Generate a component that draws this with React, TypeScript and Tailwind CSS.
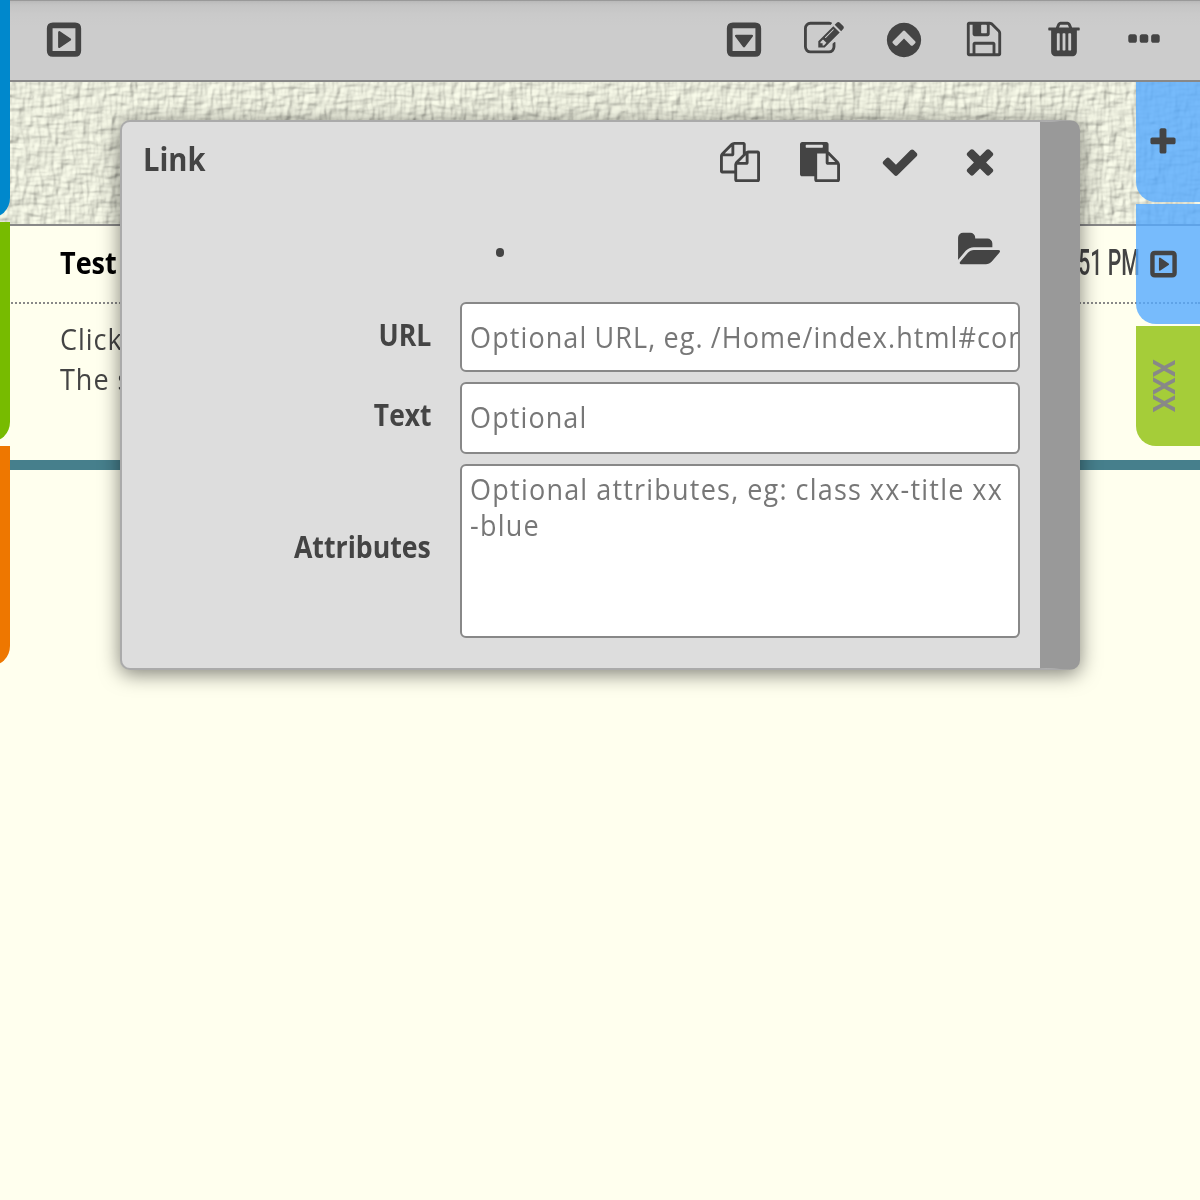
import type { ReactNode } from 'react';

const PATHS = {
  caretRight:
    'M1216 876q0 26-22 42l-480 330q-26 17-54 4-28-14-28-46V546q0-32 28-46 28-13 54 4l480 330q22 16 22 42zM384 364v1024h1024V364zM400 108h992q272 0 272 272v992q0 272-272 272H400q-272 0-272-272V380q0-272 272-272z',
  caretDown:
    'M896 1230q-26 0-42-22L500 738q-17-26-4-54 14-28 46-28h708q32 0 46 28 13 28-4 54l-354 470q-16 22-42 22zM384 364v1024h1024V364zM400 108h992q272 0 272 272v992q0 272-272 272H400q-272 0-272-272V380q0-272 272-272z',
  copy: 'M1696 384q40 0 68 28t28 68v1216q0 40-28 68t-68 28h-960q-40 0-68-28t-28-68v-288h-544q-40 0-68-28t-28-68v-672q0-40 20-88t48-76l408-408q28-28 76-48t88-20h416q40 0 68 28t28 68v328q68-40 128-40h416zm-544 213l-299 299h299v-299zm-640-384l-299 299h299v-299zm196 647l316-316v-416h-384v416q0 40-28 68t-68 28h-416v640h512v-256q0-40 20-88t48-76zm956 804v-1152h-384v416q0 40-28 68t-68 28h-416v640h896z',
  paste:
    'M768 1664h896v-640h-416q-40 0-68-28t-28-68v-416h-384v1152zm256-1440v-64q0-13-9.5-22.5t-22.5-9.5h-704q-13 0-22.5 9.5t-9.5 22.5v64q0 13 9.5 22.5t22.5 9.5h704q13 0 22.5-9.5t9.5-22.5zm256 672h299l-299-299v299zm512 128v672q0 40-28 68t-68 28h-960q-40 0-68-28t-28-68v-160h-544q-40 0-68-28t-28-68v-1344q0-40 28-68t68-28h1088q40 0 68 28t28 68v328q21 13 36 28l408 408q28 28 48 76t20 88z',
  check:
    'M1671 566q0 40-28 68l-724 724-136 136q-28 28-68 28t-68-28l-136-136-362-362q-28-28-28-68t28-68l136-136q28-28 68-28t68 28l294 295 656-657q28-28 68-28t68 28l136 136q28 28 28 68z',
  times:
    'M1490 1322q0 40-28 68l-136 136q-28 28-68 28t-68-28l-294-294-294 294q-28 28-68 28t-68-28l-136-136q-28-28-28-68t28-68l294-294-294-294q-28-28-28-68t28-68l136-136q28-28 68-28t68 28l294 294 294-294q28-28 68-28t68 28l136 136q28 28 28 68t-28 68l-294 294 294 294q28 28 28 68z',
  plus: 'M1600 736v192q0 40-28 68t-68 28h-416v416q0 40-28 68t-68 28h-192q-40 0-68-28t-28-68v-416h-416q-40 0-68-28t-28-68v-192q0-40 28-68t68-28h416v-416q0-40 28-68t68-28h192q40 0 68 28t28 68v416h416q40 0 68 28t28 68z',
  folder:
    'M1815 952q0 31-31 66l-336 396q-43 51-120.5 86.5t-143.5 35.5h-1088q-34 0-60.5-13t-26.5-43q0-31 31-66l336-396q43-51 120.5-86.5t143.5-35.5h1088q34 0 60.5 13t26.5 43zm-343-344v160h-832q-94 0-197 47.5t-164 119.5l-337 396-5 6q0-4-.5-12.5t-.5-12.5v-960q0-92 66-158t158-66h320q92 0 158 66t66 158v32h544q92 0 158 66t66 158z',
  trash:
    'M704 1376v-704q0-14-9-23t-23-9h-64q-14 0-23 9t-9 23v704q0 14 9 23t23 9h64q14 0 23-9t9-23zm256 0v-704q0-14-9-23t-23-9h-64q-14 0-23 9t-9 23v704q0 14 9 23t23 9h64q14 0 23-9t9-23zm256 0v-704q0-14-9-23t-23-9h-64q-14 0-23 9t-9 23v704q0 14 9 23t23 9h64q14 0 23-9t9-23zm-544-992h448l-48-117q-7-9-17-11h-317q-10 2-17 11zm928 32v64q0 14-9 23t-23 9h-96v948q0 83-47 143.5t-113 60.5h-832q-66 0-113-58.5t-47-141.5v-952h-96q-14 0-23-9t-9-23v-64q0-14 9-23t23-9h309l70-167q15-37 54-63t79-26h320q40 0 79 26t54 63l70 167h309q14 0 23 9t9 23z',
  up: 'M1293 1139l102-102q19-19 19-45t-19-45l-454-454q-19-19-45-19t-45 19l-454 454q-19 19-19 45t19 45l102 102q19 19 45 19t45-19l307-307 307 307q19 19 45 19t45-19zm371-243q0 209-103 385.5t-279.5 279.5-385.5 103-385.5-103-279.5-279.5-103-385.5 103-385.5 279.5-279.5 385.5-103 385.5 103 279.5 279.5 103 385.5z',
  save: 'M512 1536h768v-384h-768v384zm896 0h128v-896q0-14-10-38.5t-20-34.5l-281-281q-10-10-34-20t-39-10v416q0 40-28 68t-68 28h-576q-40 0-68-28t-28-68v-416h-128v1280h128v-416q0-40 28-68t68-28h832q40 0 68 28t28 68v416zm-384-928v-320q0-13-9.5-22.5t-22.5-9.5h-192q-13 0-22.5 9.5t-9.5 22.5v320q0 13 9.5 22.5t22.5 9.5h192q13 0 22.5-9.5t9.5-22.5zm640 32v928q0 40-28 68t-68 28h-1344q-40 0-68-28t-28-68v-1344q0-40 28-68t68-28h928q40 0 88 20t76 48l280 280q28 28 48 76t20 88z',
  dots: 'M576 736v192q0 40-28 68t-68 28h-192q-40 0-68-28t-28-68v-192q0-40 28-68t68-28h192q40 0 68 28t28 68zm512 0v192q0 40-28 68t-68 28h-192q-40 0-68-28t-28-68v-192q0-40 28-68t68-28h192q40 0 68 28t28 68zm512 0v192q0 40-28 68t-68 28h-192q-40 0-68-28t-28-68v-192q0-40 28-68t68-28h192q40 0 68 28t28 68z',
  edit: 'M888 1184l116-116-152-152-116 116v56h96v96h56zm440-720q-16-16-33 1l-350 350q-17 17-1 33t33-1l350-350q17-17 1-33zm80 594v190q0 119-84.5 203.5t-203.5 84.5h-832q-119 0-203.5-84.5t-84.5-203.5v-832q0-119 84.5-203.5t203.5-84.5h832q63 0 117 25 15 7 18 23 3 17-9 29l-49 49q-14 14-32 8-23-6-45-6h-832q-66 0-113 47t-47 113v832q0 66 47 113t113 47h832q66 0 113-47t47-113v-126q0-13 9-22l64-64q15-15 35-7t20 29zm-96-738l288 288-672 672h-288v-288zm444 132l-92 92-288-288 92-92q28-28 68-28t68 28l152 152q28 28 28 68t-28 68z',
};

function Icon({ name, className = 'size-10' }: { name: keyof typeof PATHS; className?: string }) {
  return (
    <svg
      viewBox={name === 'folder' ? '-64 0 1920 1792' : '0 0 1792 1792'}
      className={`block shrink-0 overflow-visible ${className}`}
      fill="#444"
      fillRule="evenodd"
    >
      <path d={PATHS[name]} />
    </svg>
  );
}

function Linen() {
  return (
    <svg className="block h-full w-full" preserveAspectRatio="none">
      <filter id="linen" x="0" y="0" width="100%" height="100%" colorInterpolationFilters="sRGB">
        <feTurbulence type="fractalNoise" baseFrequency="0.05 0.14" numOctaves="2" seed="4" result="h" />
        <feTurbulence type="fractalNoise" baseFrequency="0.14 0.05" numOctaves="2" seed="9" result="v" />
        <feComposite in="h" in2="v" operator="arithmetic" k1="0" k2="0.5" k3="0.5" k4="0" />
        <feColorMatrix values="0 0 0 0 0  0 0 0 0 0  0 0 0 0 0  1 0 0 0 0" />
        <feDiffuseLighting surfaceScale="2.3" diffuseConstant="1.01" lightingColor="#f9fbea" result="lit">
          <feDistantLight azimuth="225" elevation="66" />
        </feDiffuseLighting>
        <feGaussianBlur stdDeviation="0.6" />
      </filter>
      <rect width="100%" height="100%" filter="url(#linen)" />
    </svg>
  );
}

function Row({ label, align, children }: { label: ReactNode; align: string; children: ReactNode }) {
  return (
    <div className="flex">
      <div className={`flex w-[309px] shrink-0 justify-end text-[30px]/[40px] font-bold ${align}`}>{label}</div>
      <div className="ml-[29px] w-[560px]">{children}</div>
    </div>
  );
}

const box = 'overflow-hidden rounded-[6px] border-2 border-[#888] bg-white';

export default function App() {
  return (
    <div className="relative h-[1200px] w-[1200px] overflow-hidden bg-[#ffffee] font-['Open_Sans',sans-serif] text-[#444]">
      <header className="flex h-[82px] items-start justify-between border-b-2 border-[#888] bg-[#ccc] bg-[linear-gradient(#999_0,#999_1px,#b9b9b9_1px,#c4c4c4_5px,#cacaca_14px,#ccc_26px)] pt-5 pr-9 pl-11">
        <Icon name="caretRight" />
        <nav className="flex gap-10">
          <Icon name="caretDown" />
          <Icon name="edit" className="-mt-px size-10" />
          <Icon name="up" />
          <Icon name="save" className="-mt-px size-10" />
          <Icon name="trash" className="-mt-px size-10" />
          <Icon name="dots" />
        </nav>
      </header>
      <div className="h-[144px] border-b-2 border-[#888]">
        <Linen />
      </div>
      <main>
        <div className="flex h-[78px] items-start justify-between border-b-2 border-dotted border-[#888] pr-[60px] pl-[60px]">
          <h1 className="mt-[17px] origin-left scale-x-[0.9] text-[30px]/[40px] font-bold text-black">Test</h1>
          <span className="mt-[17px] origin-right scale-x-[0.59] font-[Roboto,sans-serif] text-[36px]/[40px] font-medium whitespace-nowrap">
            :51 PM
          </span>
        </div>
        <div className="h-[156px] pt-[15px] pl-[60px]">
          <p className="w-[700px] origin-left scale-x-[0.9] text-[30px]/[40px] tracking-[1.1px]">
            Click
            <br />
            The s
          </p>
        </div>
        <div className="h-[10px] bg-[#467f8c]" />
      </main>

      <aside className="absolute top-[-2px] left-[-50px] flex w-[60px] flex-col gap-1">
        <div className="h-[220px] rounded-br-[20px] bg-[#0088cc]" />
        <div className="h-[220px] rounded-br-[20px] bg-[#77bb00]" />
        <div className="h-[220px] rounded-br-[20px] bg-[#ee7700]" />
      </aside>

      <aside className="absolute top-[82px] right-0 flex w-16 flex-col gap-0.5">
        <div className="flex h-[120px] items-center rounded-bl-[20px] bg-[#55aaff]/80 pl-[11px]">
          <Icon name="plus" className="size-8" />
        </div>
        <div className="flex h-[120px] items-center rounded-bl-[20px] bg-[#55aaff]/80 pl-[12px]">
          <Icon name="caretRight" className="size-[31px]" />
        </div>
        <div className="flex h-[120px] items-center justify-center rounded-bl-[20px] bg-[#a5cd39] pr-2">
          <span className="scale-y-[0.88] text-[30px]/[40px] font-bold text-[#888] [writing-mode:vertical-rl]">
            XXX
          </span>
        </div>
      </aside>

      <section className="absolute top-[120px] left-[120px] h-[550px] w-[960px] rounded-[10px] border-2 border-r-[40px] border-[#aaa] border-r-[#999] bg-[#ddd] shadow-[0_4px_20px_rgba(0,0,0,0.5)]">
        <div className="flex h-[80px] items-start justify-between pr-10 pl-[21px]">
          <h2 className="mt-[15px] origin-left scale-x-[0.91] text-[32px]/[44px] font-bold">Link</h2>
          <div className="mt-5 flex gap-10">
            <Icon name="copy" />
            <Icon name="paste" />
            <Icon name="check" />
            <Icon name="times" className="-mt-px size-10" />
          </div>
        </div>
        <div className="flex h-[100px] items-start justify-between pr-[39px] pl-[374px]">
          <div className="mt-[46px] h-[9px] w-2 rounded-full bg-[#444]" />
          <Icon name="folder" className="mt-[28px] h-10 w-[43px]" />
        </div>
        <div className="flex flex-col gap-[10px]">
          <Row align="pt-[13px]" label={<span className="origin-right scale-x-[0.89]">URL</span>}>
            <div className={`h-[70px] ${box}`}>
              <input
                className="block h-[64px] w-[700px] origin-left scale-x-[0.9] pl-[9px] text-[30px] tracking-[1.2px] [word-spacing:-1px] outline-none placeholder:text-[#777]"
                placeholder="Optional URL, eg. /Home/index.html#contents"
              />
            </div>
          </Row>
          <Row align="pt-[13px]" label={<span className="origin-right scale-x-[0.88]">Text</span>}>
            <div className={`h-[72px] ${box}`}>
              <input
                className="block h-[64px] w-[600px] origin-left scale-x-[0.9] pl-[9px] text-[30px] tracking-[1.2px] outline-none placeholder:text-[#777]"
                placeholder="Optional"
              />
            </div>
          </Row>
          <Row align="pt-[63px]" label={<span className="origin-right scale-x-[0.89]">Attributes</span>}>
            <div className={`h-[174px] ${box}`}>
              <textarea
                className="block h-[170px] w-[618px] origin-left scale-x-[0.9] resize-none pt-[5px] pl-[9px] text-[30px]/[36px] tracking-[1.35px] [word-spacing:-0.5px] outline-none placeholder:text-[#777]"
                placeholder={'Optional attributes, eg: class xx-title xx\n-blue'}
              />
            </div>
          </Row>
        </div>
      </section>
    </div>
  );
}
